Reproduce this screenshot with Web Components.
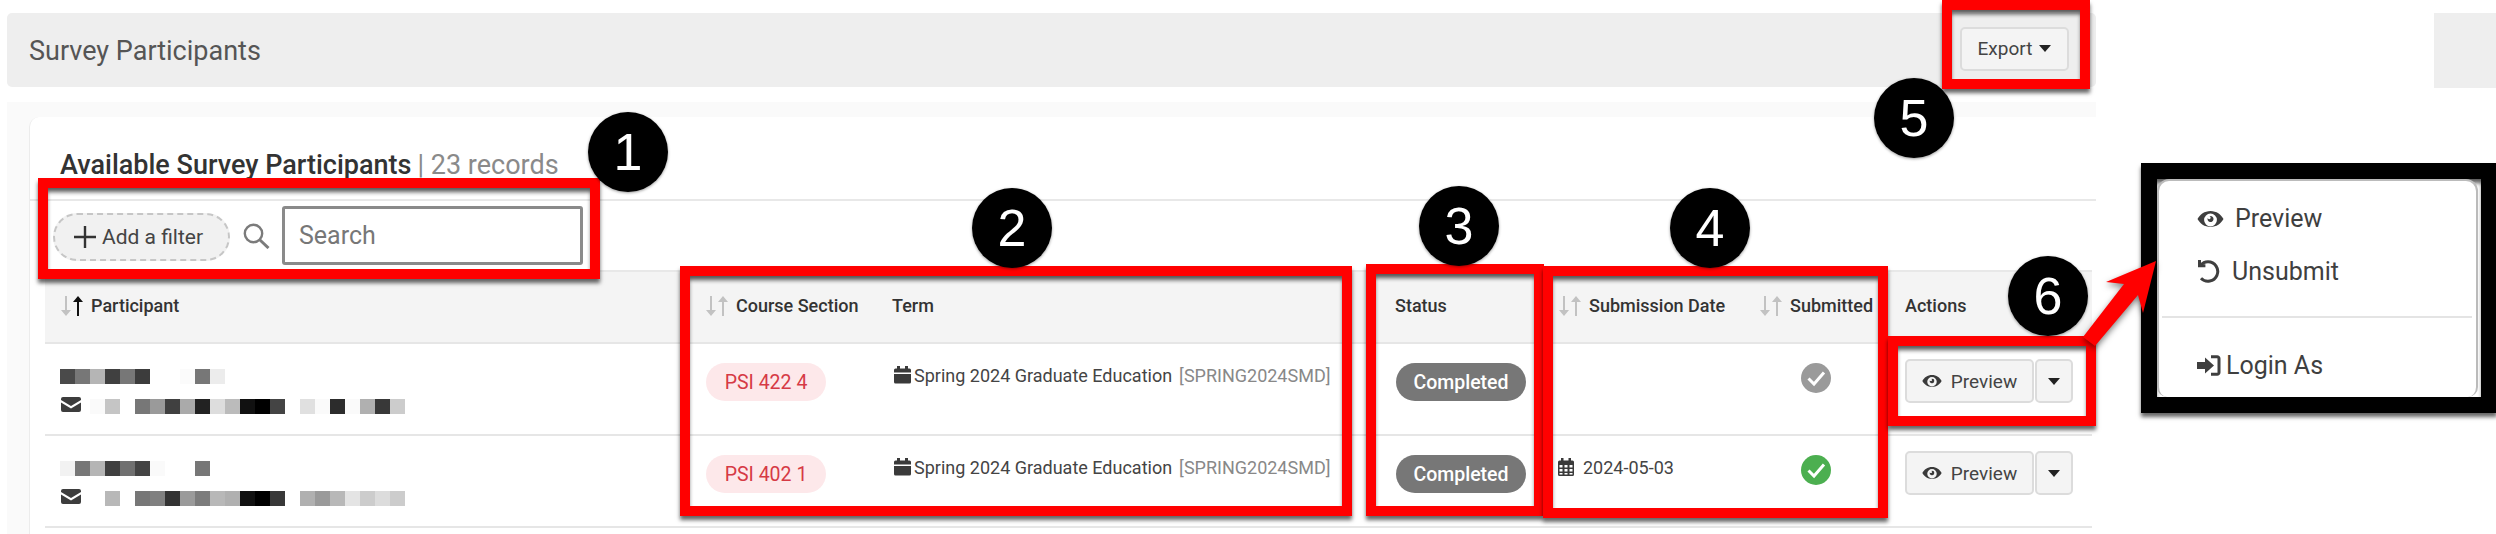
<!DOCTYPE html>
<html>
<head>
<meta charset="utf-8">
<title>Survey Participants</title>
<style>
	html, body { margin: 0; background: #fff; }
	body { font-family: Roboto, "Liberation Sans", sans-serif; color: #444; }
</style>
</head>
<body>
<survey-page>
	<div slot="main">
		<page-bar>
			Survey Participants
			<app-button slot="actions" caret style="width:109px;padding:0;margin-top:-3px">Export</app-button>
		</page-bar>
		<survey-card>
			<span slot="title">Available Survey Participants</span>
			<span slot="count">| 23 records</span>
			<filter-bar slot="filters"></filter-bar>
			<table-row head>
				<head-cell sort="up">Participant</head-cell>
				<head-cell sort="none">Course Section</head-cell>
				<head-cell>Term</head-cell>
				<head-cell>Status</head-cell>
				<head-cell sort="none">Submission Date</head-cell>
				<head-cell sort="none">Submitted</head-cell>
				<head-cell>Actions</head-cell>
			</table-row>
			<table-row>
				<participant-cell
					name="4a4a4a 777 b5b5b5 404040 777 3c3c3c - - fbfbfb 777 ececec"
					mail="- - fafafa c5c5c5 - 777 9a9a9a 404040 aaa 222 ddd bbb 111 000 444 - e0e0e0 fafafa 2c2c2c fafafa b0b0b0 383838 ccc"></participant-cell>
				<section-pill>PSI 422 4</section-pill>
				<term-cell code="[SPRING2024SMD]">Spring 2024 Graduate Education</term-cell>
				<status-pill>Completed</status-pill>
				<date-cell></date-cell>
				<submit-mark></submit-mark>
				<action-buttons></action-buttons>
			</table-row>
			<table-row>
				<participant-cell
					name="f2f2f2 777 b5b5b5 404040 707070 444 fafafa - - 777"
					mail="- - - b8b8b8 - 777 808080 333 9a9a9a 7c7c7c b8b8b8 b0b0b0 111 000 383838 - b0b0b0 9a9a9a b8b8b8 e4e4e4 ccc dcdcdc ccc"></participant-cell>
				<section-pill>PSI 402 1</section-pill>
				<term-cell code="[SPRING2024SMD]">Spring 2024 Graduate Education</term-cell>
				<status-pill>Completed</status-pill>
				<date-cell>2024-05-03</date-cell>
				<submit-mark done></submit-mark>
				<action-buttons></action-buttons>
			</table-row>
		</survey-card>
	</div>
	<div slot="side"></div>

	<note-box style="left:38px;top:178px;width:562px;height:101px"></note-box>
	<note-box style="left:680px;top:266px;width:672px;height:250px"></note-box>
	<note-box style="left:1366px;top:264px;width:178px;height:252px"></note-box>
	<note-box style="left:1543px;top:266px;width:345px;height:252px"></note-box>
	<note-box style="left:1942px;top:0;width:148px;height:89px"></note-box>
	<note-box style="left:1888px;top:336px;width:208px;height:90px"></note-box>
	<note-box black style="left:2141px;top:163px;width:356px;height:250px">
		<row-menu></row-menu>
	</note-box>
	<note-arrow></note-arrow>

	<note-badge style="left:588px;top:112px">1</note-badge>
	<note-badge style="left:972px;top:188px">2</note-badge>
	<note-badge style="left:1419px;top:186px">3</note-badge>
	<note-badge style="left:1670px;top:188px">4</note-badge>
	<note-badge style="left:1874px;top:78px">5</note-badge>
	<note-badge style="left:2008px;top:256px">6</note-badge>
</survey-page>

<script>
const ICONS = {
	eye: '<path fill="currentColor" fill-rule="evenodd" d="M13.5 1C7.6 1 2.8 4.6.5 9c2.3 4.4 7.100 8 13 8s10.700-3.600 13-8c-2.300-4.400-7.100-8-13-8zm0 2.600a6.400 6.400 0 1 1 0 12.800 6.400 6.400 0 0 1 0-12.800zm0 2.400a3 3 0 0 0-1 .2 1.500 1.500 0 1 1-1.800 1.800A3 3 0 1 0 13.500 6z"/>',
	undo: '<path fill="none" stroke="currentColor" stroke-width="3" d="M3.500 5.500C5.500 3 8 1.800 11 1.800a9.700 9.700 0 1 1-7 16.400"/><path fill="currentColor" d="M1 0h3v4.200h4.400v3H1z"/>',
	login: '<path fill="currentColor" d="M0 7h8V2.500L17 10.500l-9 8V14H0z"/><path fill="none" stroke="currentColor" stroke-width="3" d="M14 1.800h6.200a1.800 1.800 0 0 1 1.800 1.800v13.800a1.800 1.800 0 0 1-1.800 1.800H14"/>',
	term: '<path fill="currentColor" d="M3 0h3v2.500h5V0h3v2.500h1.500A1.500 1.500 0 0 1 17 4v2.500H0V4a1.500 1.500 0 0 1 1.500-1.500H3zM0 8h17v8a1.500 1.500 0 0 1-1.500 1.500h-14A1.500 1.500 0 0 1 0 16z"/>',
	date: '<path fill="currentColor" fill-rule="evenodd" d="M3 0h2.500v2.500h5V0H13v2.500h1.500A1.500 1.500 0 0 1 16 4v12.500a1.500 1.500 0 0 1-1.500 1.500h-13A1.500 1.500 0 0 1 0 16.500V4a1.500 1.500 0 0 1 1.500-1.500H3zM1.500 7v2.500h3V7zm5 0v2.500h3V7zm5 0v2.500h3V7zm-10 4v2.500h3V11zm5 0v2.500h3V11zm5 0v2.500h3V11zm-10 4v1.600h3V15zm5 0v1.600h3V15zm5 0v1.600h3V15z"/>',
	mail: '<path fill="#3d3d3d" d="M2 0h16a2 2 0 0 1 2 2v1L10 9 0 3V2a2 2 0 0 1 2-2zM0 5.500 10 11.500 20 5.500V13a2 2 0 0 1-2 2H2a2 2 0 0 1-2-2z"/>'
};

function icon(name, w, h, box) {
	return `<svg width="${w}" height="${h}" viewBox="${box}" aria-hidden="true">${ICONS[name]}</svg>`;
}

// host element for the whole 2496x534 shot
class SurveyPage extends HTMLElement {
	constructor() {
		super();
		this.attachShadow({ mode: 'open' });
		this.shadowRoot.innerHTML = `
			<style>
				:host { display: block; position: relative; width: 2496px; height: 534px; overflow: hidden; }
				#layout { display: flex; height: 100%; box-sizing: border-box; padding: 13px 0 0 7px; gap: 338px; }
				#main { display: block; width: 2089px; flex: none; }
				#side { display: block; flex: 1; height: 75px; background: #eee; }
				::slotted([slot="main"]) { display: flex; flex-direction: column; gap: 15px; }
			</style>
			<div id="layout">
				<div id="main"><slot name="main"></slot></div>
				<div id="side"><slot name="side"></slot></div>
			</div>
			<slot></slot>
		`;
	}
}

class PageBar extends HTMLElement {
	constructor() {
		super();
		this.attachShadow({ mode: 'open' });
		this.shadowRoot.innerHTML = `
			<style>
				:host {
					display: flex; align-items: center; justify-content: space-between;
					height: 74px; box-sizing: border-box; padding: 0 27px 0 22px;
					background: #eee; border-radius: 5px;
					font-size: 27px; color: #555;
				}
				span { padding-top: 2px; }
			</style>
			<span><slot></slot></span>
			<slot name="actions"></slot>
		`;
	}
}

class SurveyCard extends HTMLElement {
	constructor() {
		super();
		this.attachShadow({ mode: 'open' });
		this.shadowRoot.innerHTML = `
			<style>
				:host { display: block; height: 432px; box-sizing: border-box; background: #fafafa; padding: 15px 0 0 22px; }
				#card { height: 100%; box-sizing: border-box; background: #fff; border-radius: 10px 0 0 0; border-left: 1px solid #ececec; padding-left: 15px; }
				#title { display: flex; align-items: center; gap: 6px; height: 84px; box-sizing: border-box; padding: 14px 0 0 30px; margin-left: -15px; border-bottom: 2px solid #e8e8e8; font-size: 27px; }
				#title ::slotted([slot="title"]) { font-weight: 500; color: #333; }
				#title ::slotted([slot="count"]) { color: #8a8a8a; }
				#rows { width: 2047px; }
			</style>
			<div id="card">
				<div id="title"><slot name="title"></slot><slot name="count"></slot></div>
				<slot name="filters"></slot>
				<div id="rows"><slot></slot></div>
			</div>
		`;
	}
}

class FilterBar extends HTMLElement {
	constructor() {
		super();
		this.attachShadow({ mode: 'open' });
		this.shadowRoot.innerHTML = `
			<style>
				:host { display: flex; align-items: center; height: 69px; box-sizing: border-box; padding: 0 0 0 8px; }
				#add {
					display: flex; align-items: center; gap: 6px; box-sizing: border-box;
					width: 177px; height: 48px; padding: 0 0 0 19px; margin-top: 3px;
					border: 2px dashed #c6c6c6; border-radius: 24px; background: #f1f1f1;
					font-size: 21px; color: #444;
				}
				#glass { margin: 0 12px 0 13px; color: #7b7b7b; }
				#search {
					display: flex; align-items: center; box-sizing: border-box;
					width: 301px; height: 59px; padding-left: 14px;
					border: 3px solid #8a8a8a; border-radius: 3px;
					font-size: 25px; color: #777; background: #fff;
				}
			</style>
			<div id="add">
				<svg width="22" height="22" viewBox="0 0 22 22"><path fill="#333" d="M9.800 0h2.400v9.800H22v2.400h-9.800V22H9.800v-9.800H0V9.800h9.800z"/></svg>
				Add a filter
			</div>
			<svg id="glass" width="27" height="26" viewBox="0 0 27 26"><circle cx="10.500" cy="10.500" r="8.700" fill="none" stroke="currentColor" stroke-width="2.400"/><path d="M17 17l8.500 8" stroke="currentColor" stroke-width="3" fill="none"/></svg>
			<div id="search">Search</div>
		`;
	}
}

// one table line, the seven columns live here
class TableRow extends HTMLElement {
	constructor() {
		super();
		this.attachShadow({ mode: 'open' });
		this.shadowRoot.innerHTML = `
			<style>
				:host {
					display: grid; box-sizing: border-box; height: 92px;
					grid-template-columns: 645px 187px 503px 163px 201px 146px 202px;
					border-bottom: 2px solid #e6e6e6; background: #fff;
				}
				:host([head]) { height: 74px; background: #f4f4f4; border-top: 2px solid #e8e8e8; }
			</style>
			<slot></slot>
		`;
	}
}

class HeadCell extends HTMLElement {
	constructor() {
		super();
		const sort = this.getAttribute('sort');
		const upColor = sort === 'up' ? '#111' : '#c2c2c2';
		const arrows = sort ? `
			<svg width="24" height="20" viewBox="0 0 24 20">
				<path fill="#c2c2c2" d="M5 0h2v14h4l-5 6-5-6h4z"/>
				<path fill="${upColor}" d="M17 20h2V6h4l-5-6-5 6h4z"/>
			</svg>` : '';
		this.attachShadow({ mode: 'open' });
		this.shadowRoot.innerHTML = `
			<style>
				:host {
					display: flex; align-items: flex-start; gap: 7px; box-sizing: border-box;
					padding: 24px 0 0 15px; font-size: 18px; font-weight: 500; color: #333; line-height: 20px;
				}
				svg { flex: none; margin-top: 0; }
			</style>
			${arrows}<span><slot></slot></span>
		`;
	}
}

class BlurMosaic extends HTMLElement {
	constructor() {
		super();
		this.attachShadow({ mode: 'open' });
		const cells = (this.getAttribute('cells') || '').split(' ').map((c) =>
			c === '-' ? '<i></i>' : `<i style="background:#${c}"></i>`
		).join('');
		this.shadowRoot.innerHTML = `
			<style>
				:host { display: flex; height: 15px; }
				i { display: block; width: 15px; height: 15px; flex: none; }
			</style>
			${cells}
		`;
	}
}

class ParticipantCell extends HTMLElement {
	constructor() {
		super();
		this.attachShadow({ mode: 'open' });
		this.shadowRoot.innerHTML = `
			<style>
				:host { display: block; position: relative; padding: 25px 0 0 15px; }
				blur-mosaic + blur-mosaic { margin-top: 15px; }
				svg { position: absolute; left: 16px; top: 53px; }
			</style>
			<blur-mosaic cells="${this.getAttribute('name')}"></blur-mosaic>
			<blur-mosaic cells="${this.getAttribute('mail')}"></blur-mosaic>
			${icon('mail', 20, 15, '0 0 20 15')}
		`;
	}
}

class SectionPill extends HTMLElement {
	constructor() {
		super();
		this.attachShadow({ mode: 'open' });
		this.shadowRoot.innerHTML = `
			<style>
				:host { display: block; padding: 19px 0 0 16px; }
				span {
					display: flex; align-items: center; justify-content: center;
					width: 120px; height: 38px; border-radius: 19px;
					background: #fde8ea; color: #d63a45; font-size: 19.500px;
				}
			</style>
			<span><slot></slot></span>
		`;
	}
}

class TermCell extends HTMLElement {
	constructor() {
		super();
		this.attachShadow({ mode: 'open' });
		this.shadowRoot.innerHTML = `
			<style>
				:host { display: flex; align-items: center; gap: 3px; height: 18px; margin-top: 22px; padding-left: 17px; font-size: 18px; color: #444; white-space: nowrap; }
				svg { flex: none; color: #3a3a3a; }
				b { font-weight: 400; color: #888; margin-left: 4px; }
			</style>
			${icon('term', 17, 18, '0 0 17 18')}<span><slot></slot></span><b>${this.getAttribute('code')}</b>
		`;
	}
}

class StatusPill extends HTMLElement {
	constructor() {
		super();
		this.attachShadow({ mode: 'open' });
		this.shadowRoot.innerHTML = `
			<style>
				:host { display: block; padding: 19px 0 0 16px; }
				span {
					display: flex; align-items: center; justify-content: center;
					width: 130px; height: 38px; border-radius: 19px;
					background: #777; color: #fff; font-size: 19.500px; font-weight: 500;
				}
			</style>
			<span><slot></slot></span>
		`;
	}
}

class DateCell extends HTMLElement {
	constructor() {
		super();
		this.attachShadow({ mode: 'open' });
		const empty = !this.textContent.trim();
		this.shadowRoot.innerHTML = `
			<style>
				:host { display: flex; align-items: center; gap: 9px; height: 18px; margin-top: 22px; padding-left: 15px; font-size: 18px; color: #444; }
				svg { flex: none; color: #3a3a3a; }
			</style>
			${empty ? '' : icon('date', 16, 18, '0 0 16 18')}<span><slot></slot></span>
		`;
	}
}

class SubmitMark extends HTMLElement {
	constructor() {
		super();
		const fill = this.hasAttribute('done') ? '#4caf50' : '#9a9a9a';
		this.attachShadow({ mode: 'open' });
		this.shadowRoot.innerHTML = `
			<style>
				:host { display: block; padding: 19px 0 0 57px; }
				svg { display: block; }
			</style>
			<svg width="30" height="30" viewBox="0 0 30 30">
				<circle cx="15" cy="15" r="15" fill="${fill}"/>
				<path d="M7.500 15.500l5.500 5.500L23 9.500" fill="none" stroke="#fff" stroke-width="3"/>
			</svg>
		`;
	}
}

class AppButton extends HTMLElement {
	constructor() {
		super();
		const caret = this.hasAttribute('caret') ? '<svg class="caret" width="12" height="7" viewBox="0 0 12 7"><path fill="currentColor" d="M0 0h12L6 7z"/></svg>' : '';
		this.attachShadow({ mode: 'open' });
		this.shadowRoot.innerHTML = `
			<style>
				:host {
					display: inline-flex; align-items: center; justify-content: center; gap: 7px;
					box-sizing: border-box; height: 44px; padding: 0 19px;
					background: #f4f4f4; border: 2px solid #dcdcdc; border-radius: 5px;
					font-size: 19px; color: #444;
				}
				.caret { color: #222; }
			</style>
			<slot></slot>${caret}
		`;
	}
}

class ActionButtons extends HTMLElement {
	constructor() {
		super();
		this.attachShadow({ mode: 'open' });
		this.shadowRoot.innerHTML = `
			<style>
				:host { display: flex; gap: 1px; padding: 15px 0 0 15px; }
				.first { width: 129px; padding: 0; gap: 9px; }
				.second { width: 38px; padding: 0; gap: 0; }
				svg { flex: none; color: #3a3a3a; }
			</style>
			<app-button class="first">${icon('eye', 20, 14, '0 0 27 18')}Preview</app-button>
			<app-button class="second" caret></app-button>
		`;
	}
}

class RowMenu extends HTMLElement {
	constructor() {
		super();
		this.attachShadow({ mode: 'open' });
		this.shadowRoot.innerHTML = `
			<style>
				:host {
					display: block; box-sizing: border-box; width: 321px; height: 218px; padding-top: 11px;
					background: #fff; border: 2px solid #bbb; border-bottom: 0; border-radius: 12px 12px 10px 10px;
					font-size: 25px; color: #3f3f3f;
				}
				.item { display: flex; align-items: center; height: 53px; padding-left: 38px; }
				svg { flex: none; }
				hr { margin: 18px 4px 21px 3px; border: 0; border-top: 2px solid #e4e4e4; }
			</style>
			<div class="item" style="gap:11px">${icon('eye', 27, 18, '0 0 27 18')}Preview</div>
			<div class="item" style="gap:12px">${icon('undo', 23, 24, '0 0 23 24')}Unsubmit</div>
			<hr>
			<div class="item" style="gap:5px">${icon('login', 24, 21, '0 0 24 21')}Login As</div>
		`;
	}
}

// annotation layer drawn over the screenshot
class NoteBox extends HTMLElement {
	constructor() {
		super();
		this.attachShadow({ mode: 'open' });
		this.shadowRoot.innerHTML = `
			<style>
				:host {
					position: absolute; box-sizing: border-box; display: block;
					border: 10px solid #f00;
					box-shadow: 0 4px 4px rgba(0,0,0,.6), inset 0 5px 4px -1px rgba(0,0,0,.65);
				}
				:host([black]) { border: 16px solid #000; }
			</style>
			<slot></slot>
		`;
	}
}

class NoteBadge extends HTMLElement {
	constructor() {
		super();
		this.attachShadow({ mode: 'open' });
		this.shadowRoot.innerHTML = `
			<style>
				:host {
					position: absolute; display: flex; align-items: center; justify-content: center;
					width: 80px; height: 80px; border-radius: 50%;
					background: #000; color: #fff; box-shadow: 0 1px 3px rgba(0,0,0,.4);
					font: 52px "Liberation Sans", sans-serif;
				}
			</style>
			<slot></slot>
		`;
	}
}

class NoteArrow extends HTMLElement {
	constructor() {
		super();
		this.attachShadow({ mode: 'open' });
		this.shadowRoot.innerHTML = `
			<style>
				:host { position: absolute; left: 2075px; top: 250px; display: block; }
				svg { display: block; filter: drop-shadow(0 3px 3px rgba(0,0,0,.5)); }
			</style>
			<svg width="90" height="105" viewBox="2075 250 90 105">
				<path fill="#f00" d="M2083 337L2124 284 2106 282 2156 261 2143 313 2138 295 2095 346z"/>
			</svg>
		`;
	}
}

customElements.define('survey-page', SurveyPage);
customElements.define('page-bar', PageBar);
customElements.define('survey-card', SurveyCard);
customElements.define('filter-bar', FilterBar);
customElements.define('table-row', TableRow);
customElements.define('head-cell', HeadCell);
customElements.define('blur-mosaic', BlurMosaic);
customElements.define('participant-cell', ParticipantCell);
customElements.define('section-pill', SectionPill);
customElements.define('term-cell', TermCell);
customElements.define('status-pill', StatusPill);
customElements.define('date-cell', DateCell);
customElements.define('submit-mark', SubmitMark);
customElements.define('app-button', AppButton);
customElements.define('action-buttons', ActionButtons);
customElements.define('row-menu', RowMenu);
customElements.define('note-box', NoteBox);
customElements.define('note-badge', NoteBadge);
customElements.define('note-arrow', NoteArrow);
</script>
</body>
</html>
